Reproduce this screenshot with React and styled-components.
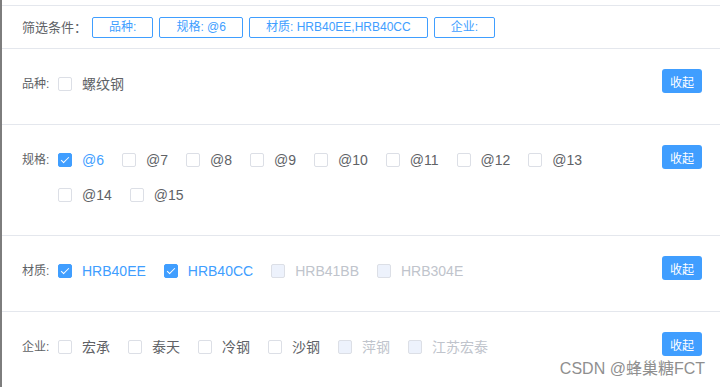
import React, { useState } from "react";
import styled, { createGlobalStyle } from "styled-components";

const GlobalStyle = createGlobalStyle`
  body {
    margin: 0;
    background: #fff;
    font-family: "Liberation Sans", "Noto Sans CJK SC", sans-serif;
  }
`;

const Page = styled.div`
  position: relative;
  min-height: 387px;
  padding-top: 5px;
  border-left: 2px solid #7d7d7d;
  box-sizing: border-box;
  overflow: hidden;
`;

const FilterBar = styled.div`
  display: flex;
  align-items: center;
  height: 42px;
  padding: 0 20px;
  border-top: 1px solid #e4e7ed;
  border-bottom: 1px solid #e4e7ed;
`;

const FilterLabel = styled.span`
  font-size: 13px;
  line-height: 1;
  color: #606266;
  margin-right: 5px;
`;

const Tags = styled.div`
  display: flex;
  gap: 6px;
`;

const Tag = styled.span`
  display: inline-flex;
  align-items: center;
  height: 21px;
  box-sizing: border-box;
  padding: 0 16px;
  border: 1px solid #409eff;
  border-radius: 2px;
  color: #409eff;
  font-size: 12px;
  line-height: 1;
  white-space: pre;
`;

const Section = styled.div`
  display: flex;
  align-items: flex-start;
  padding: 17px 18px 23px 20px;
  border-bottom: 1px solid #e4e7ed;
`;

const SectionLabel = styled.span`
  flex: 0 0 36px;
  display: flex;
  align-items: center;
  height: 35px;
  font-size: 12px;
  line-height: 1;
  color: #606266;
`;

const Options = styled.div`
  flex: 1;
  display: flex;
  flex-wrap: wrap;
`;

const Option = styled.label`
  display: flex;
  align-items: center;
  height: 35px;
  margin-right: 18px;
  font-size: 14px;
  line-height: 1;
  cursor: ${p => (p.disabled ? "not-allowed" : "pointer")};
  color: ${p => (p.disabled ? "#c0c4cc" : p.checked ? "#409eff" : "#606266")};
`;

const Box = styled.span`
  position: relative;
  width: 14px;
  height: 14px;
  box-sizing: border-box;
  border-radius: 2px;
  margin-right: 10px;
  border: 1px solid ${p => (p.checked ? "#409eff" : "#dcdfe6")};
  background: ${p => (p.checked ? "#409eff" : p.disabled ? "#edf2fc" : "#fff")};

  &::after {
    content: "";
    display: ${p => (p.checked ? "block" : "none")};
    position: absolute;
    left: 4px;
    top: 1px;
    width: 3px;
    height: 7px;
    border: 1px solid #fff;
    border-left: 0;
    border-top: 0;
    transform: rotate(45deg);
  }
`;

const FoldButton = styled.button`
  margin-top: 3px;
  width: 40px;
  height: 24px;
  padding: 0;
  border: 0;
  border-radius: 3px;
  background: #409eff;
  color: #fff;
  font-size: 12px;
  font-family: inherit;
  cursor: pointer;
`;

const Watermark = styled.div`
  position: absolute;
  right: 15px;
  bottom: 9px;
  font-size: 16px;
  color: #8f8f8f;
  pointer-events: none;
`;

const groups = [
  { key: "pz", name: "品种", options: [{ v: "螺纹钢" }] },
  {
    key: "gg",
    name: "规格",
    options: ["@6", "@7", "@8", "@9", "@10", "@11", "@12", "@13", "@14", "@15"].map(v => ({ v })),
  },
  {
    key: "cz",
    name: "材质",
    options: [
      { v: "HRB40EE" },
      { v: "HRB40CC" },
      { v: "HRB41BB", disabled: true },
      { v: "HRB304E", disabled: true },
    ],
  },
  {
    key: "qy",
    name: "企业",
    options: [
      { v: "宏承" },
      { v: "泰天" },
      { v: "冷钢" },
      { v: "沙钢" },
      { v: "萍钢", disabled: true },
      { v: "江苏宏泰", disabled: true },
    ],
  },
];

export default function App() {
  const [selected, setSelected] = useState({
    pz: [],
    gg: ["@6"],
    cz: ["HRB40EE", "HRB40CC"],
    qy: [],
  });

  const toggle = (key, v) => {
    setSelected(s => {
      const list = s[key];
      return { ...s, [key]: list.includes(v) ? list.filter(x => x !== v) : [...list, v] };
    });
  };

  return (
    <Page>
      <GlobalStyle />
      <FilterBar>
        <FilterLabel>筛选条件：</FilterLabel>
        <Tags>
          {groups.map(g => (
            <Tag key={g.key}>
              {g.name}:{selected[g.key].length ? " " + selected[g.key].join(",") : ""}
            </Tag>
          ))}
        </Tags>
      </FilterBar>

      {groups.map(g => (
        <Section key={g.key}>
          <SectionLabel>{g.name}:</SectionLabel>
          <Options>
            {g.options.map(o => {
              const checked = selected[g.key].includes(o.v);
              return (
                <Option
                  key={o.v}
                  checked={checked}
                  disabled={o.disabled}
                  onClick={() => !o.disabled && toggle(g.key, o.v)}
                >
                  <Box checked={checked} disabled={o.disabled} />
                  {o.v}
                </Option>
              );
            })}
          </Options>
          <FoldButton>收起</FoldButton>
        </Section>
      ))}

      <Watermark>CSDN @蜂巢糖FCT</Watermark>
    </Page>
  );
}
